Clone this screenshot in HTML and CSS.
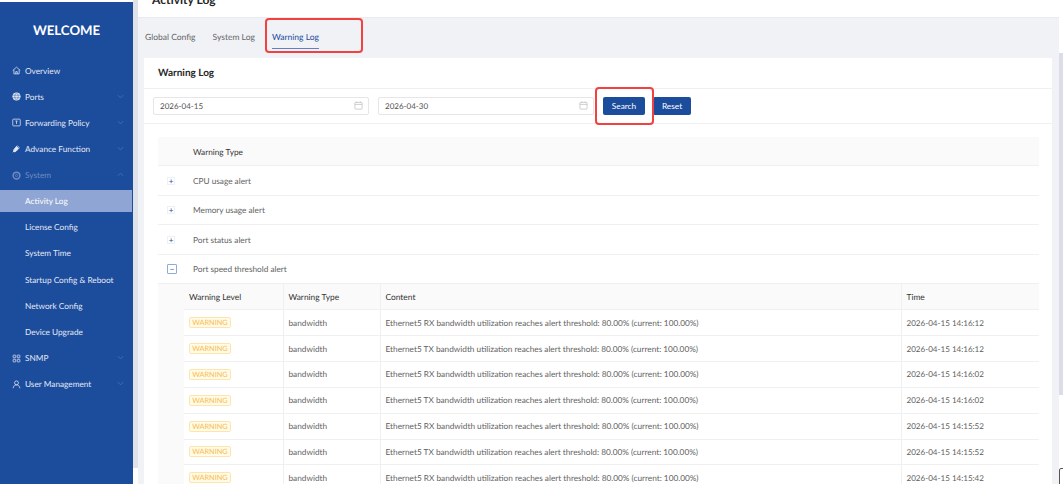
FILE: index.html
```html
<!DOCTYPE html>
<html lang="en">
<head>
  <meta charset="UTF-8" />
  <title>Activity Log</title>
  <link rel="stylesheet" href="styles.css">
</head>
<body>
  <div class="app">
    <aside class="sidebar">
      <div class="logo">WELCOME</div>
      <ul class="menu">
        <li class="menu-item">
          <svg class="menu-icon" viewBox="0 0 12 12"><path d="M1 6 6 1.500 11 6M2.500 5v5.500h7V5M5 10.500V7.500h2v3"/></svg>
          Overview
        </li>
        <li class="menu-item">
          <svg class="menu-icon" viewBox="0 0 12 12"><circle class="solid" cx="6" cy="6" r="5"/><path class="cut" d="M1 4.300h10M1 7.700h10M6 1c-3 3-3 7 0 10M6 1c3 3 3 7 0 10"/></svg>
          Ports
          <svg class="arrow" viewBox="0 0 8 8"><path d="M1 2.500 4 5.500 7 2.500"/></svg>
        </li>
        <li class="menu-item">
          <svg class="menu-icon" viewBox="0 0 12 12"><rect x="1" y="1.500" width="10" height="9" rx="1"/><path d="M4.500 4h3M6 4v4"/></svg>
          Forwarding Policy
          <svg class="arrow" viewBox="0 0 8 8"><path d="M1 2.500 4 5.500 7 2.500"/></svg>
        </li>
        <li class="menu-item">
          <svg class="menu-icon" viewBox="0 0 12 12"><path class="solid" d="M6 3 9 6 5 10 2.500 10.500 2 10 2.500 7.500Z"/><path d="M7 2 10 5M1 11l1.500-1.500"/></svg>
          Advance Function
          <svg class="arrow" viewBox="0 0 8 8"><path d="M1 2.500 4 5.500 7 2.500"/></svg>
        </li>
        <li class="menu-item is-muted">
          <svg class="menu-icon" viewBox="0 0 12 12"><circle cx="6" cy="6" r="4.500" stroke-width="2"/><circle cx="6" cy="6" r="1.500"/></svg>
          System
          <svg class="arrow" viewBox="0 0 8 8"><path d="M1 5.500 4 2.500 7 5.500"/></svg>
        </li>
        <li class="menu-item sub is-active">Activity Log</li>
        <li class="menu-item sub">License Config</li>
        <li class="menu-item sub">System Time</li>
        <li class="menu-item sub">Startup Config &amp; Reboot</li>
        <li class="menu-item sub">Network Config</li>
        <li class="menu-item sub">Device Upgrade</li>
        <li class="menu-item">
          <svg class="menu-icon" viewBox="0 0 12 12"><rect x="1.500" y="1.500" width="3.500" height="3.500" rx=".6"/><rect x="7" y="1.500" width="3.500" height="3.500" rx=".6"/><rect x="1.500" y="7" width="3.500" height="3.500" rx=".6"/><rect x="7" y="7" width="3.500" height="3.500" rx=".6"/></svg>
          SNMP
          <svg class="arrow" viewBox="0 0 8 8"><path d="M1 2.500 4 5.500 7 2.500"/></svg>
        </li>
        <li class="menu-item">
          <svg class="menu-icon" viewBox="0 0 12 12"><circle cx="6" cy="3.800" r="2.600"/><path d="M1.500 11c.4-3 2-4.400 4.500-4.400s4.100 1.400 4.500 4.400"/></svg>
          User Management
          <svg class="arrow" viewBox="0 0 8 8"><path d="M1 2.500 4 5.500 7 2.500"/></svg>
        </li>
      </ul>
    </aside>
    <div class="side-scroll"></div>

    <main class="main">
      <header class="page-head"><h2>Activity Log</h2></header>
      <nav class="tabs">
        <span class="tab">Global Config</span>
        <span class="tab">System Log</span>
        <span class="tab is-active">Warning Log</span>
      </nav>

      <section class="card">
        <div class="card-title">Warning Log</div>
        <div class="filters">
          <div class="date-input">
            2026-04-15
            <svg class="cal" viewBox="0 0 10 10"><rect x="1" y="1.500" width="8" height="7.500" rx=".8"/><path d="M1 3.800h8M3 .7v1.500M7 .7v1.500"/></svg>
          </div>
          <div class="date-input">
            2026-04-30
            <svg class="cal" viewBox="0 0 10 10"><rect x="1" y="1.500" width="8" height="7.500" rx=".8"/><path d="M1 3.800h8M3 .7v1.500M7 .7v1.500"/></svg>
          </div>
          <button class="btn btn-search">Search</button>
          <button class="btn btn-reset">Reset</button>
        </div>

        <div class="table-wrap">
          <div class="group-head">Warning Type</div>
          <div class="group-row"><span class="expand">+</span>CPU usage alert</div>
          <div class="group-row"><span class="expand">+</span>Memory usage alert</div>
          <div class="group-row"><span class="expand">+</span>Port status alert</div>
          <div class="group-row"><span class="expand is-open">&minus;</span>Port speed threshold alert</div>
          <div class="nested">
            <table class="log-table">
              <colgroup>
                <col class="col-level"><col class="col-type"><col><col class="col-time">
              </colgroup>
              <thead>
                <tr><th>Warning Level</th><th>Warning Type</th><th>Content</th><th>Time</th></tr>
              </thead>
              <tbody>
                <tr><td><span class="tag">WARNING</span></td><td>bandwidth</td><td>Ethernet5 RX bandwidth utilization reaches alert threshold: 80.00% (current: 100.00%)</td><td class="time">2026-04-15 14:16:12</td></tr>
                <tr><td><span class="tag">WARNING</span></td><td>bandwidth</td><td>Ethernet5 TX bandwidth utilization reaches alert threshold: 80.00% (current: 100.00%)</td><td class="time">2026-04-15 14:16:12</td></tr>
                <tr><td><span class="tag">WARNING</span></td><td>bandwidth</td><td>Ethernet5 RX bandwidth utilization reaches alert threshold: 80.00% (current: 100.00%)</td><td class="time">2026-04-15 14:16:02</td></tr>
                <tr><td><span class="tag">WARNING</span></td><td>bandwidth</td><td>Ethernet5 TX bandwidth utilization reaches alert threshold: 80.00% (current: 100.00%)</td><td class="time">2026-04-15 14:16:02</td></tr>
                <tr><td><span class="tag">WARNING</span></td><td>bandwidth</td><td>Ethernet5 RX bandwidth utilization reaches alert threshold: 80.00% (current: 100.00%)</td><td class="time">2026-04-15 14:15:52</td></tr>
                <tr><td><span class="tag">WARNING</span></td><td>bandwidth</td><td>Ethernet5 TX bandwidth utilization reaches alert threshold: 80.00% (current: 100.00%)</td><td class="time">2026-04-15 14:15:52</td></tr>
                <tr><td><span class="tag">WARNING</span></td><td>bandwidth</td><td>Ethernet5 RX bandwidth utilization reaches alert threshold: 80.00% (current: 100.00%)</td><td class="time">2026-04-15 14:15:42</td></tr>
              </tbody>
            </table>
          </div>
        </div>
      </section>
    </main>
    <div class="page-scroll"><div class="page-thumb"></div></div>
  </div>

  <!-- red annotation boxes drawn over the screenshot -->
  <div class="mark mark-tab"></div>
  <div class="mark mark-search"></div>
  <div class="cursor"></div>
</body>
</html>
```

FILE: styles.css
```css
:root {
  --blue: #1c4c9c;
  --page-bg: #f0f2f6;
  --line: #f0f0f0;
  --text: #5f5f5f;
  --dark: #262626;
}
* {
  box-sizing: border-box;
}
html, body {
  margin: 0;
  height: 484px;
  overflow: hidden;
  background: #fff;
}
body {
  position: relative;
  font-family: "Lato", "Noto Sans", sans-serif;
  font-size: 8.250px;
  color: var(--text);
  text-rendering: geometricPrecision;
}
.app {
  display: flex;
  height: 484px;
}

/* sidebar */
.sidebar {
  width: 133px;
  flex-shrink: 0;
  margin-top: 2px;
  background: var(--blue);
  color: #e4eaf5;
}
.logo {
  height: 57.500px;
  padding-top: 20px;
  text-align: center;
  font-size: 13.200px;
  line-height: 17px;
  font-weight: 700;
  color: #fff;
}
.menu {
  list-style: none;
  margin: 0;
  padding: 0;
}
.menu-item {
  position: relative;
  display: flex;
  align-items: center;
  height: 22px;
  margin-bottom: 4.150px;
  padding-left: 12px;
  font-size: 8.250px;
}
.menu-item.sub {
  padding-left: 25px;
}
.menu-item.is-active {
  width: 132px;
  background: #8fa5d3;
  color: #fff;
}
.menu-item.is-muted {
  color: #6f8cc0;
}
.menu-icon {
  width: 9px;
  height: 9px;
  margin-right: 4px;
  fill: none;
  stroke: currentColor;
  stroke-width: 1;
}
.menu-icon .solid {
  fill: currentColor;
}
.menu-icon .cut {
  stroke: var(--blue);
  stroke-width: .6;
}
.arrow {
  position: absolute;
  right: 9px;
  top: 7px;
  width: 7px;
  height: 7px;
  fill: none;
  stroke: #4a70b3;
  stroke-width: 1;
}
.side-scroll {
  width: 5px;
  height: 468px;
  flex-shrink: 0;
  background: #e0e2e9;
}

/* main */
.main {
  flex: 1;
  min-width: 0;
  background: var(--page-bg);
}
.page-head {
  height: 18px;
  padding-left: 14px;
  background: #fff;
  border-bottom: 1px solid #e9ebef;
  overflow: hidden;
}
.page-head h2 {
  margin: -8px 0 0;
  font-size: 12px;
  line-height: 15px;
  font-weight: 700;
  color: var(--dark);
}
.tabs {
  display: flex;
  gap: 17px;
  height: 40px;
  padding: 0 0 0 7px;
}
.tab {
  height: 31px;
  line-height: 38px;
  font-size: 8.500px;
  color: #666;
}
.tab.is-active {
  color: #1c4c9c;
  border-bottom: 1px solid #5a82cc;
}
.card {
  width: 908px;
  margin-left: 6px;
  background: #fff;
}
.card-title {
  height: 31px;
  padding-left: 14px;
  line-height: 30px;
  font-size: 10px;
  font-weight: 700;
  color: var(--dark);
  border-bottom: 1px solid var(--line);
}
.filters {
  display: flex;
  align-items: center;
  height: 35px;
  padding-left: 9px;
  border-bottom: 1px solid var(--line);
}
.date-input {
  position: relative;
  width: 216px;
  height: 18px;
  margin-right: 9px;
  padding-left: 6px;
  line-height: 16px;
  font-size: 8px;
  color: #555;
  border: 1px solid #e6e6e6;
  border-radius: 2px;
}
.cal {
  position: absolute;
  right: 5px;
  top: 3px;
  width: 9px;
  height: 9px;
  fill: none;
  stroke: #bdbdbd;
  stroke-width: .8;
}
.btn {
  height: 18px;
  padding: 0;
  border: none;
  border-radius: 2px;
  background: var(--blue);
  color: #fff;
  font-family: inherit;
  font-size: 8.300px;
}
.btn-search {
  width: 42px;
  margin-right: 8px;
}
.btn-reset {
  width: 38px;
}

/* tables */
.table-wrap {
  margin: 13px 13px 0 14px;
}
.group-head {
  height: 29px;
  padding-left: 35px;
  line-height: 30px;
  color: #333;
  background: #fafafa;
  border-bottom: 1px solid var(--line);
}
.group-row {
  display: flex;
  align-items: center;
  height: 29.500px;
  padding: 1px 0 0 9px;
  border-bottom: 1px solid var(--line);
}
.expand {
  display: inline-block;
  width: 8px;
  height: 8px;
  margin-right: 18px;
  line-height: 6px;
  text-align: center;
  font-size: 8px;
  color: #1c4c9c;
  border: 1px solid #eef0f4;
}
.expand.is-open {
  width: 10px;
  height: 10px;
  margin-right: 16px;
  line-height: 8px;
  font-weight: 700;
  color: #5b7fb8;
  border-color: #8fabd8;
  border-radius: 1px;
}
.nested {
  padding-left: 26px;
  background: #fafafa;
}
.log-table {
  width: 100%;
  border-collapse: collapse;
  table-layout: fixed;
  background: #fff;
}
.col-level {
  width: 99px;
}
.col-type {
  width: 97px;
}
.col-time {
  width: 138px;
}
.log-table th,
.log-table td {
  height: 25.850px;
  padding: 0 5px;
  text-align: left;
  white-space: nowrap;
  border-bottom: 1px solid var(--line);
  border-right: 1px solid var(--line);
}
.log-table th {
  font-size: 8.400px;
  font-weight: 400;
  color: #333;
  background: #fafafa;
}
.log-table td:last-child,
.log-table th:last-child {
  border-right: none;
}
.log-table .time {
  font-size: 8.050px;
}
.tag {
  display: inline-block;
  width: 42px;
  height: 11px;
  line-height: 10px;
  text-align: center;
  font-size: 7.300px;
  color: #f7ba50;
  background: #fffbe6;
  border: 1px solid #ffe5ab;
  border-radius: 2px;
}

/* page scrollbar */
.page-scroll {
  width: 4px;
  flex-shrink: 0;
  padding-top: 53px;
}
.page-thumb {
  height: 342px;
  background: #dcdde6;
}

/* things on top of the screenshot */
.mark {
  position: absolute;
  border: 2px solid #f24141;
  border-radius: 4px;
}
.mark-tab {
  left: 265px;
  top: 18px;
  width: 98px;
  height: 35px;
}
.mark-search {
  left: 595px;
  top: 87px;
  width: 59px;
  height: 38px;
}
.cursor {
  position: absolute;
  left: 1059px;
  top: 468px;
  width: 5px;
  height: 18px;
  border: 1px solid #555;
  border-radius: 2px 0 0 2px;
}
```
